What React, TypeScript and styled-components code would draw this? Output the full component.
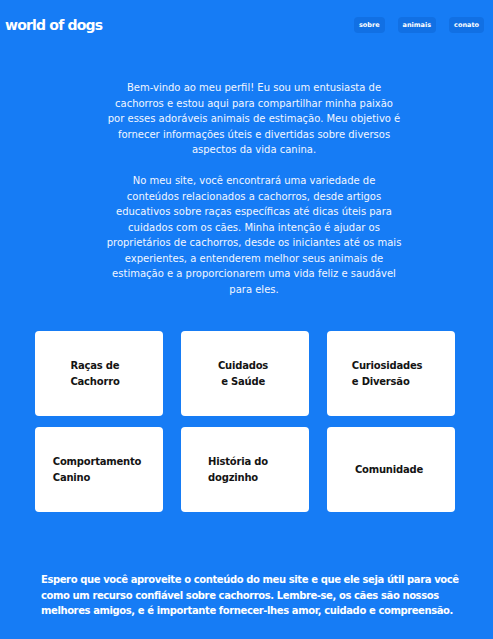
import React from 'react';
import styled, { createGlobalStyle } from 'styled-components';

const GlobalStyle = createGlobalStyle`
    html, body {
        margin: 0;
        padding: 0;
        background: #167cf5;
    }
    body {
        font-family: "DejaVu Sans", "Open Sans", sans-serif;
        color: #fff;
    }
`

const Page = styled.div`
    min-height: 639px;
    background: #167cf5;
    overflow: hidden;
`

const Header = styled.header`
    display: flex;
    align-items: center;
    justify-content: space-between;
    height: 50px;
    padding: 0 9px 0 5px;
`

const Logo = styled.h1`
    margin: 0;
    font-size: 14px;
    font-weight: 700;
    letter-spacing: -0.8px;
    color: #fff;
`

const Nav = styled.nav`
    display: flex;
    gap: 13px;
`

const NavButton = styled.a`
    display: flex;
    align-items: center;
    height: 16px;
    padding: 0 5px;
    border-radius: 4px;
    background: #1170e4;
    font-size: 6.5px;
    font-weight: 700;
    color: #fff;
`

const Intro = styled.section`
    display: flex;
    flex-direction: column;
    gap: 15.5px;
    width: 330px;
    margin: 30px 0 0 89px;
    text-align: center;
`

const Paragraph = styled.p`
    margin: 0;
    font-size: 10px;
    line-height: 15.5px;
    white-space: nowrap;
    color: #f2f6ff;
`

const Cards = styled.section`
    display: grid;
    grid-template-columns: repeat(3, 128px);
    grid-auto-rows: 85px;
    column-gap: 18px;
    row-gap: 11px;
    margin: 34px 0 0 35px;
`

const Card = styled.div`
    display: flex;
    align-items: center;
    justify-content: center;
    background: #fff;
    border-radius: 4px;
`

const CardTitle = styled.span<{ $shift?: number }>`
    display: inline-block;
    text-align: left;
    font-size: 10px;
    font-weight: 700;
    line-height: 16px;
    letter-spacing: -0.2px;
    color: #141414;
    transform: translateX(${p => p.$shift ?? 0}px);
`

const Closing = styled.p`
    width: 420px;
    margin: 60px 0 0 41px;
    font-size: 10px;
    font-weight: 700;
    line-height: 15.5px;
    letter-spacing: -0.4px;
    white-space: nowrap;
    color: #fff;
`

const links = ['sobre', 'animais', 'conato'];

const intro = [
    [
        'Bem-vindo ao meu perfil! Eu sou um entusiasta de',
        'cachorros e estou aqui para compartilhar minha paixão',
        'por esses adoráveis animais de estimação. Meu objetivo é',
        'fornecer informações úteis e divertidas sobre diversos',
        'aspectos da vida canina.',
    ],
    [
        'No meu site, você encontrará uma variedade de',
        'conteúdos relacionados a cachorros, desde artigos',
        'educativos sobre raças específicas até dicas úteis para',
        'cuidados com os cães. Minha intenção é ajudar os',
        'proprietários de cachorros, desde os iniciantes até os mais',
        'experientes, a entenderem melhor seus animais de',
        'estimação e a proporcionarem uma vida feliz e saudável',
        'para eles.',
    ],
];

const closing = [
    'Espero que você aproveite o conteúdo do meu site e que ele seja útil para você',
    'como um recurso confiável sobre cachorros. Lembre-se, os cães são nossos',
    'melhores amigos, e é importante fornecer-lhes amor, cuidado e compreensão.',
];

const cards: { lines: string[]; shift?: number }[] = [
    { lines: ['Raças de', 'Cachorro'], shift: -4 },
    { lines: ['Cuidados', '\u00a0e Saúde'], shift: -2 },
    { lines: ['Curiosidades', 'e Diversão'], shift: -4 },
    { lines: ['Comportamento', 'Canino'], shift: -2 },
    { lines: ['História do', 'dogzinho'], shift: -7 },
    { lines: ['Comunidade'], shift: -2 },
];

function Lines({ lines }: { lines: string[] }) {
    return (
        <>
            {lines.map((line, i) => (
                <React.Fragment key={i}>
                    {i > 0 && <br />}
                    {line}
                </React.Fragment>
            ))}
        </>
    );
}

export default function App() {
    return (
        <Page>
            <GlobalStyle />
            <Header>
                <Logo>world of dogs</Logo>
                <Nav>
                    {links.map(l => (
                        <NavButton key={l}>{l}</NavButton>
                    ))}
                </Nav>
            </Header>

            <Intro>
                {intro.map((p, i) => (
                    <Paragraph key={i}>
                        <Lines lines={p} />
                    </Paragraph>
                ))}
            </Intro>

            <Cards>
                {cards.map(c => (
                    <Card key={c.lines[0]}>
                        <CardTitle $shift={c.shift}>
                            <Lines lines={c.lines} />
                        </CardTitle>
                    </Card>
                ))}
            </Cards>

            <Closing>
                <Lines lines={closing} />
            </Closing>
        </Page>
    );
}
